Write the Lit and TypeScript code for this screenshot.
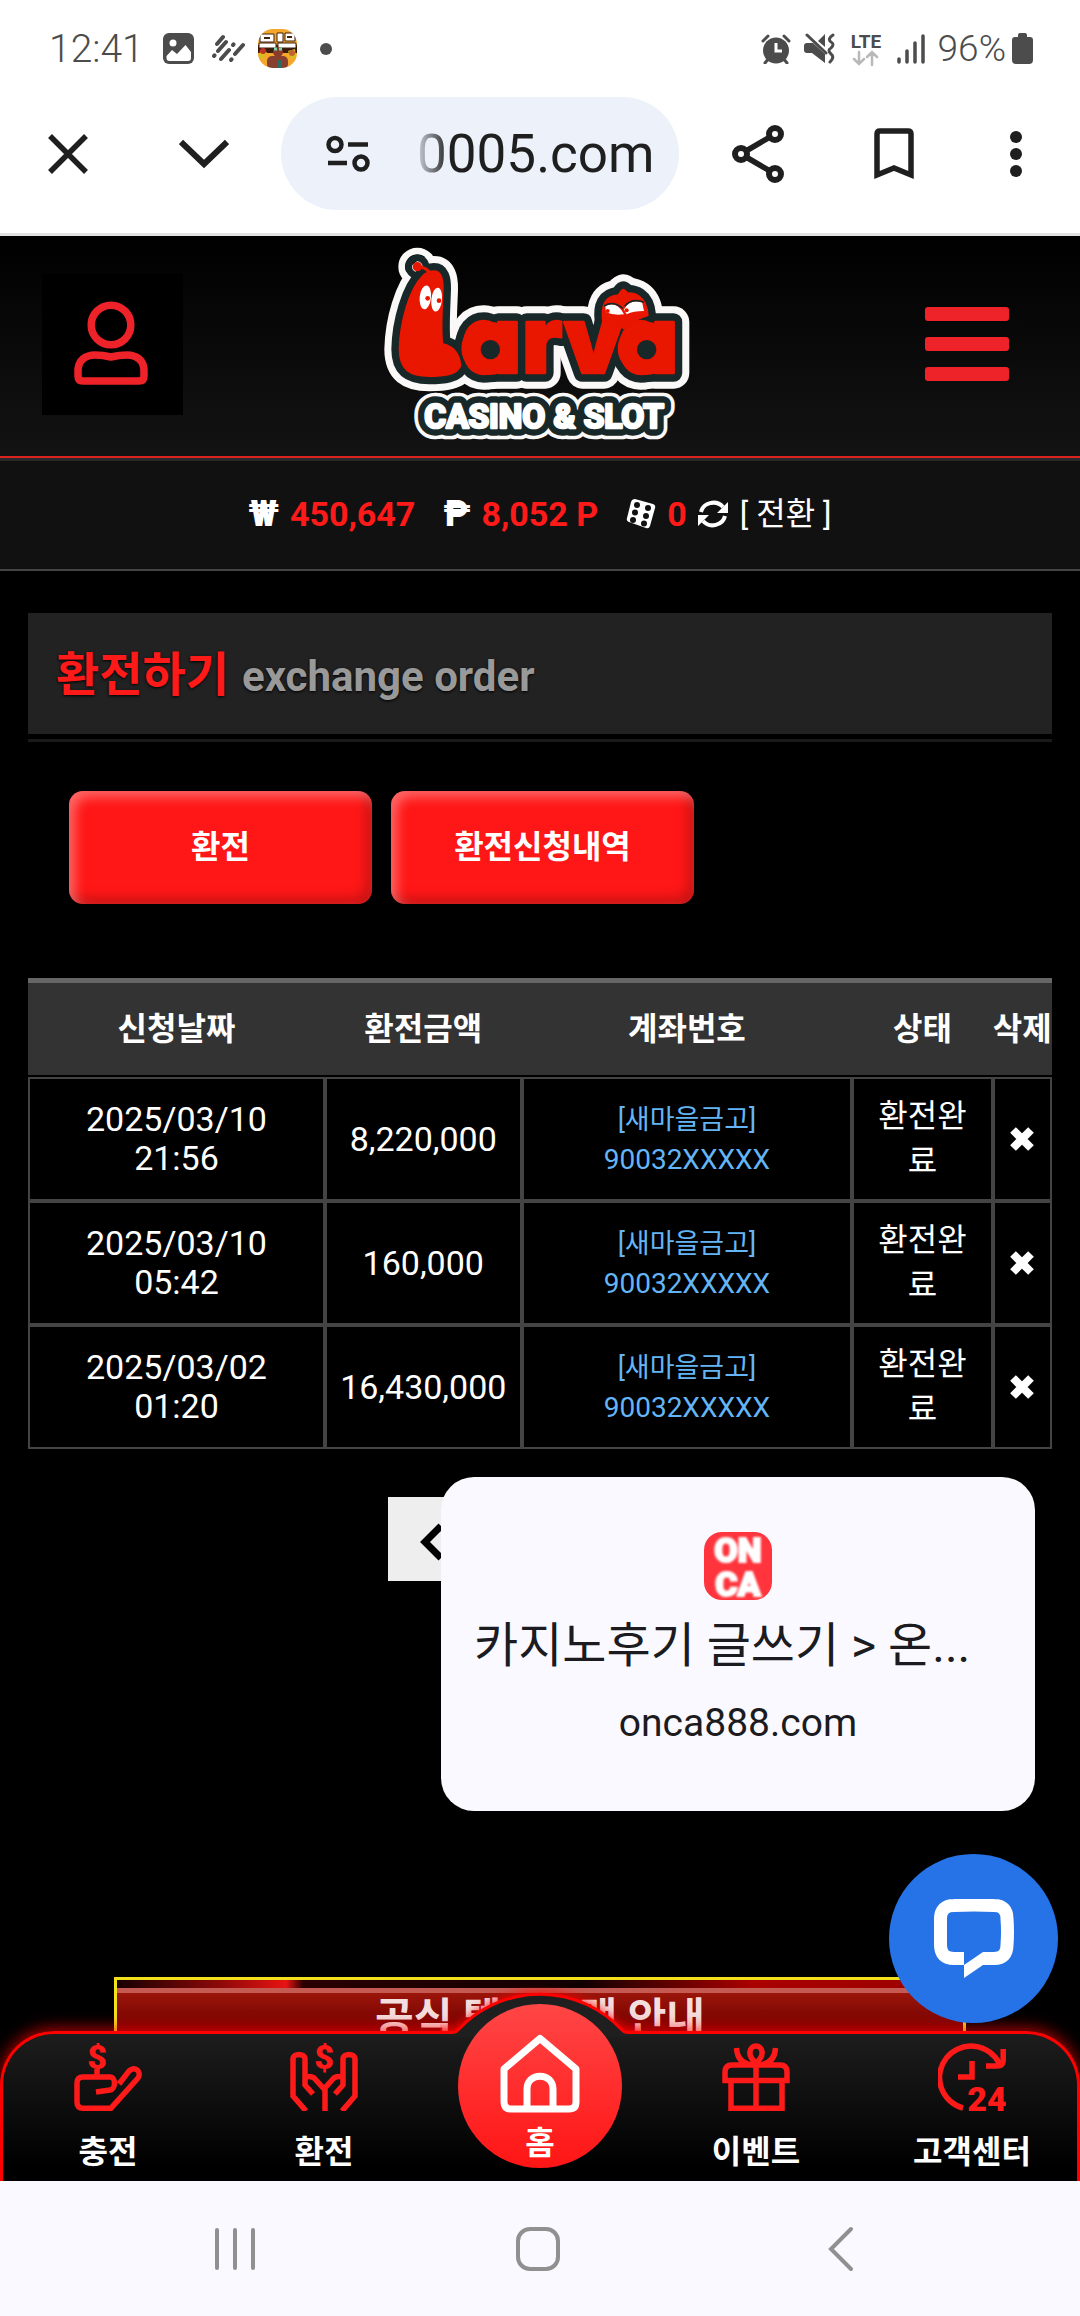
import { LitElement, html, css, svg } from "lit";
import { customElement } from "lit/decorators.js";

interface Exchange {
  date: string;
  time: string;
  amount: string;
  bank: string;
  account: string;
  status: string;
}

const EXCHANGES: Exchange[] = [
  { date: "2025/03/10", time: "21:56", amount: "8,220,000", bank: "[새마을금고]", account: "90032XXXXX", status: "환전완료" },
  { date: "2025/03/10", time: "05:42", amount: "160,000", bank: "[새마을금고]", account: "90032XXXXX", status: "환전완료" },
  { date: "2025/03/02", time: "01:20", amount: "16,430,000", bank: "[새마을금고]", account: "90032XXXXX", status: "환전완료" },
];

/* Status bar and browser toolbar */
@customElement("browser-top")
export class BrowserTop extends LitElement {
  static styles = css`
    :host { display: block; background: #fff; border-bottom: 3px solid #e1e1e1; color: #1f1f1f; }
    svg { display: block; }
    .status { display: flex; align-items: center; justify-content: space-between; height: 97px; padding: 0 47px 0 49px; color: #4c4c4c; box-sizing: border-box; }
    .group { display: flex; align-items: center; }
    .left { gap: 19px; }
    .right { gap: 13px; }
    .clock { font-size: 39px; font-weight: 300; line-height: 40px; }
    .notes { display: flex; align-items: center; gap: 13px; }
    .power { display: flex; align-items: center; gap: 6px; font-size: 37px; font-weight: 300; line-height: 40px; }
    .more { margin-left: 10px; }
    .toolbar { display: flex; align-items: center; padding-bottom: 23px; }
    button { border: 0; background: none; padding: 0; margin: 0; color: inherit; font: inherit; display: flex; align-items: center; justify-content: center; }
    .tool { width: 136px; height: 113px; }
    .dots { width: 108px; margin-right: 10px; }
    .pill { flex: 1; margin: 0 11px 0 9px; height: 113px; border-radius: 57px; background: #ecf1fa; display: flex; align-items: center; gap: 47px; padding-left: 45px; min-width: 0; }
    .url { font-size: 53px; line-height: 60px; white-space: nowrap; -webkit-mask-image: linear-gradient(90deg, rgba(0, 0, 0, 0.15), #000 32px); mask-image: linear-gradient(90deg, rgba(0, 0, 0, 0.15), #000 32px); }
  `;

  render() {
    return html`
      <div class="status">
        <div class="group left">
          <span class="clock">12:41</span>
          <div class="notes">
            <svg width="31" height="31" viewBox="0 0 31 31"><rect width="31" height="31" rx="6" fill="currentColor" /><circle cx="10" cy="10" r="3.5" fill="#fff" /><path d="M3.500 23 9 17l5 4 8.500-9 5.500 7v6q0 3-3 3H6.500q-3 0-3-3z" fill="#fff" /></svg>
            <svg width="38" height="31" viewBox="0 0 38 31" stroke="currentColor" stroke-width="4" stroke-linecap="round"><path d="M10 11l6-7M7 23l.5-.6M11 18l8-9M14 26l8-9M26 12l.500-.600M24 27l.500-.600M28 21l8-9" /></svg>
            <svg width="39" height="39" viewBox="0 0 39 39">
              <defs><clipPath id="app"><rect width="39" height="39" rx="15" /></clipPath></defs>
              <g clip-path="url(#app)"><rect width="39" height="39" fill="#f5a72c" /><rect y="16" width="39" height="8" fill="#3a1a0c" /><path d="M2 5h14v8H2zM19 4h6v9h-6zM27 4h10v8H27zM1 14h17v5H1zM20 14h18v5H20z" fill="#fff" stroke="#40200f" stroke-width="1" /><path d="M6 9h6M29 8h5" stroke="#40200f" stroke-width="2" /><path d="M2 21l7 2-4 7H1zM30 22l7-2 1 8-5 2z" fill="#d7bd1f" /><circle cx="5" cy="22" r="3" fill="#c22f25" /><circle cx="34" cy="24" r="3" fill="#c2622f" /><rect x="9" y="27" width="21" height="13" rx="5" fill="#87402f" /><circle cx="20" cy="23" r="5" fill="#8a3b2b" /><path d="M16 20h3M21 20h3" stroke="#79d6b0" stroke-width="3" /><path d="M22 31v8" stroke="#2f6a60" stroke-width="4" /></g>
            </svg>
            <svg class="more" width="12" height="12" viewBox="0 0 12 12"><circle cx="6" cy="6" r="6" fill="currentColor" /></svg>
          </div>
        </div>
        <div class="group right">
          <svg width="30" height="30" viewBox="0 0 30 30"><circle cx="15" cy="16.500" r="13" fill="currentColor" /><path d="M2 7l5-5M28 7l-5-5M4 29l4-5M26 29l-4-5" stroke="currentColor" stroke-width="3" stroke-linecap="round" /><path d="M15 9v8h6" fill="none" stroke="#fff" stroke-width="3" /></svg>
          <svg width="31" height="31" viewBox="0 0 31 31"><path d="M0 13q0-3 3-3h6L21 21v9L8 20H3q-3 0-3-3zM21 1v13l-7-6z" fill="currentColor" /><path d="M3 2l19 18" stroke="currentColor" stroke-width="3" stroke-linecap="round" /><path d="M29 2q-6 4-2 7 4 2 0 6-4 2 0 6 4 3-1 8" fill="none" stroke="currentColor" stroke-width="3" stroke-linecap="round" /></svg>
          <svg width="36" height="34" viewBox="0 0 36 34"><text x="18" y="16" text-anchor="middle" font-size="19" font-weight="700" fill="currentColor">LTE</text><path d="M11 20v12M6 27l5 5 5-5M24 33V20M19 25l5-5 5 5" fill="none" stroke="#b9b9b9" stroke-width="2.500" stroke-linecap="round" /></svg>
          <svg width="28" height="30" viewBox="0 0 28 30" stroke="currentColor" stroke-width="3.500" stroke-linecap="round"><path d="M2 25v3M10 17v11M18 9v19M26 2v26" /></svg>
          <span class="power">96%<svg width="21" height="31" viewBox="0 0 21 31"><path d="M6 2q0-2 2-2h5q2 0 2 2v2h3q3 0 3 3v20q0 4-4 4H4q-4 0-4-4V7q0-3 3-3h3z" fill="currentColor" /></svg></span>
        </div>
      </div>
      <div class="toolbar">
        <button class="tool" aria-label="닫기"><svg width="40" height="40" viewBox="0 0 40 40" stroke="currentColor" stroke-width="5.500"><path d="M2 2l36 36M38 2L2 38" /></svg></button>
        <button class="tool" aria-label="최소화"><svg width="50" height="30" viewBox="0 0 50 30" fill="none" stroke="currentColor" stroke-width="6"><path d="M2 3l23 22L48 3" /></svg></button>
        <div class="pill">
          <button aria-label="사이트 설정"><svg width="44" height="38" viewBox="0 0 44 38" fill="none" stroke="currentColor" stroke-width="4.500"><circle cx="9" cy="9.500" r="6.500" /><path d="M22 9.500h20M2 28h19" /><circle cx="35" cy="28" r="6.500" /></svg></button>
          <span class="url">0005.com</span>
        </div>
        <button class="tool" aria-label="공유"><svg width="52" height="58" viewBox="0 0 52 58" fill="none" stroke="currentColor"><g stroke-width="6"><circle cx="9" cy="29" r="6" /><circle cx="43" cy="9" r="6" /><circle cx="43" cy="49" r="6" /></g><path d="M14 26L38 12M14 32l24 14" stroke-width="5.500" /></svg></button>
        <button class="tool" aria-label="북마크"><svg width="40" height="52" viewBox="0 0 40 52" fill="none" stroke="currentColor" stroke-width="5.500"><path d="M3 47V6q0-3 3-3h28q3 0 3 3v41l-17-7z" /></svg></button>
        <button class="tool dots" aria-label="메뉴"><svg width="12" height="46" viewBox="0 0 12 46" fill="currentColor"><circle cx="6" cy="6" r="6" /><circle cx="6" cy="23" r="6" /><circle cx="6" cy="40" r="6" /></svg></button>
      </div>
    `;
  }
}

const wormBody = "M222 122C240 122 248 140 247 175C245 240 240 290 246 340C272 345 296 360 300 404C290 430 250 434 208 434C150 434 120 415 120 355C122 270 150 175 190 135Q205 122 222 122Z";
const smallHead = "M730 270C724 225 736 196 776 194C826 176 858 200 862 252C830 262 800 282 790 290Q755 270 730 270Z";

const letters = (cls: string) => svg`
  <g class=${cls}>
    <path d=${wormBody} />
    <path d=${smallHead} />
    <circle cx="172" cy="107" r="10" />
    <path d="M776 195q8-16 14-18 8 4 12 14z" />
    <ellipse cx="388" cy="352" rx="80" ry="76" />
    <ellipse cx="857" cy="352" rx="80" ry="76" />
    <text class="lava" x="303 486 611 774" y="426">arva</text>
  </g>`;

/* Site header with the logo and the balance strip */
@customElement("site-header")
export class SiteHeader extends LitElement {
  static styles = css`
    :host { display: block; }
    svg { display: block; }
    button { border: 0; padding: 0; background: none; display: flex; align-items: center; justify-content: center; font: inherit; color: inherit; }
    .bar { display: grid; grid-template-columns: 1fr auto 1fr; align-items: center; padding: 10px 71px 14px 42px; background: linear-gradient(#000, #131313); border-bottom: 2px solid #dc2320; }
    .user { width: 141px; height: 141px; background: #000; padding-right: 3px; }
    .menu { justify-self: end; }
    .logo { margin-left: 29px; }
    .lava { font-family: Inter, "Open Sans", sans-serif; font-weight: 900; font-size: 280px; font-feature-settings: "cv11"; }
    .white { fill: #fbf8f8; stroke: #fbf8f8; stroke-width: 94px; stroke-linejoin: round; }
    .dark { fill: #182727; stroke: #182727; stroke-width: 52px; stroke-linejoin: round; }
    .red { fill: #e91600; stroke: #e91600; stroke-width: 8px; stroke-linejoin: round; }
    .sub { font-family: "Liberation Sans Narrow", "Roboto", sans-serif; font-weight: 700; font-size: 100px; stroke-linejoin: round; }
    .balance { display: flex; align-items: center; justify-content: center; min-height: 108px; background: #111; border-top: 3px solid #292929; border-bottom: 2px solid #444; color: #fff; font-size: 34px; line-height: 40px; gap: 28px; padding-bottom: 2px; box-sizing: border-box; min-height: 113px; }
    .item { display: flex; align-items: center; gap: 11px; }
    .num { color: #ff1a1a; font-weight: 700; }
    .sign { font-weight: 900; font-size: 36px; }
    .convert { font-size: 32px; gap: 12px; }
  `;

  render() {
    return html`
      <header class="bar">
        <button class="user" aria-label="내 정보"><svg width="76" height="86" viewBox="0 0 76 86" fill="none" stroke="#ee2329" stroke-width="7.500"><circle cx="38" cy="24" r="19.800" /><path d="M5 72C4 58 14 54 22 54Q30 54 38 56Q46 54 54 54C62 54 72 58 71 72V75Q71 80 66 80H10Q5 80 5 75Z" /></svg></button>
        <svg class="logo" width="312" height="196" viewBox="72 45 936 588" role="img" aria-label="Larva Casino &amp; Slot">
          ${letters("white")}${letters("dark")}${letters("red")}
          <path d="M172 107Q200 108 212 130" fill="none" stroke="#e91600" stroke-width="10" />
          <g fill="#182727"><circle cx="391" cy="356" r="29" /><circle cx="860" cy="356" r="29" /></g>
          <g fill="#fff"><ellipse cx="196" cy="199" rx="17" ry="36" transform="rotate(6 196 199)" /><ellipse cx="230" cy="206" rx="16" ry="36" transform="rotate(6 230 206)" /><path d="M736 225Q770 208 792 250Q760 254 738 244Z" /><path d="M792 236Q804 206 846 212L852 240Q820 240 800 250Z" /></g>
          <g fill="#e91600"><circle cx="203" cy="202" r="7" /><circle cx="237" cy="209" r="7" /><circle cx="743" cy="240" r="6" /><circle cx="800" cy="238" r="6" /></g>
          <g fill="none" stroke="#182727" stroke-width="5"><path d="M732 225Q760 208 788 232M794 226Q816 200 852 214" /></g>
          <g class="sub">
            <text x="193" y="591" fill="#fbf8f8" stroke="#fbf8f8" stroke-width="68">CASINO &amp; SLOT</text>
            <text x="193" y="591" fill="#182727" stroke="#182727" stroke-width="46">CASINO &amp; SLOT</text>
            <text x="193" y="591" fill="#fff" stroke="#fff" stroke-width="8">CASINO &amp; SLOT</text>
          </g>
        </svg>
        <button class="menu" aria-label="전체 메뉴"><svg width="84" height="74" viewBox="0 0 84 74" fill="#ee2329"><rect width="84" height="14" rx="3" /><rect y="30" width="84" height="14" rx="3" /><rect y="60" width="84" height="14" rx="3" /></svg></button>
      </header>
      <div class="balance">
        <span class="item"><span class="sign">₩</span><span class="num">450,647</span></span>
        <span class="item"><span class="sign">₱</span><span class="num">8,052 P</span></span>
        <span class="item">
          <svg width="30" height="30" viewBox="0 0 30 30"><path d="M9 0L27 5q3 1 2 4L24 27q-1 3-4 2L3 23q-3-1-2-4L5 3q1-3 4-3z" fill="#fff" /><g fill="#111"><circle cx="11" cy="6" r="3" /><circle cx="22" cy="9" r="3" /><circle cx="9" cy="13.500" r="3" /><circle cx="20" cy="17" r="3" /><circle cx="7" cy="21" r="3" /><circle cx="18" cy="24.500" r="3" /></g></svg>
          <span class="num">0</span>
          <button class="item convert"><svg width="30" height="30" viewBox="0 0 30 30"><path d="M3 13C5 4 18 0 25 8M27 17C25 26 12 30 5 22" fill="none" stroke="#fff" stroke-width="4" /><path d="M30 3v11H19zM0 27V16h11z" fill="#fff" /></svg><span>[ 전환 ]</span></button>
        </span>
      </div>
    `;
  }
}

@customElement("site-nav")
export class SiteNav extends LitElement {
  static styles = css`
    :host { display: block; position: relative; z-index: 2; }
    svg { display: block; }
    .back { position: absolute; inset: 0; border: 3px solid #f00; border-bottom: 0; border-radius: 54px 54px 0 0; background: linear-gradient(#1d1d1d, #000 90%); box-shadow: 0 -2px 16px rgba(255, 0, 0, 0.75); clip-path: inset(-30px 0 0 0); }
    .bump { position: absolute; left: 50%; top: -44px; margin-left: -100px; }
    .rim { filter: drop-shadow(0 -2px 4px rgba(255, 0, 0, 0.7)); }
    .items { position: relative; display: grid; grid-template-columns: repeat(5, 1fr); min-height: 150px; }
    .items a { display: flex; flex-direction: column; align-items: center; gap: 21px; padding-top: 12px; color: #fff; text-decoration: none; font-size: 32px; line-height: 40px; font-weight: 700; white-space: nowrap; }
    .icon { color: #ff1a1a; fill: none; stroke: currentColor; stroke-width: 5.5px; }
    .icon text { fill: currentColor; stroke: none; font-weight: 900; }
    .items .home { justify-self: center; width: 164px; height: 164px; box-sizing: border-box; margin-top: -27px; padding-top: 30px; gap: 9px; border-radius: 50%; background: linear-gradient(#ff4646, #ff1515); }
  `;

  render() {
    return html`
      <div class="back"></div>
      <svg class="bump" width="200" height="50" viewBox="0 0 200 50">
        <path class="rim" d="M-20 80V45.500H13Q16 45.500 18 43A112 112 0 0 1 182 43Q184 45.500 187 45.500H220V80Z" fill="#1f1f1f" stroke="#f00" stroke-width="3" />
      </svg>
      <nav class="items">
        <a href="#deposit"><svg class="icon" width="68" height="68" viewBox="0 0 68 68"><path d="M45 41L55 28C61 22 68 29 64 35L37 65.200H9Q3 65.200 3 59V40Q3 34 9 34H36C42 34 42 46 36 47L22 49M23 26V34" /><text x="23" y="26" text-anchor="middle" font-size="34">$</text></svg><span>충전</span></a>
        <a href="#exchange"><svg class="icon" width="68" height="68" viewBox="0 0 68 68"><path d="M16 68L3 53V16C3 10 15 10 15 16V42L23 51M52 68L65 53V16C65 10 53 10 53 16V42L45 51M15 35C19 32 24 34 26 37L35 47V68M53 35C49 32 44 34 42 37L34 46" /><text x="34" y="26" text-anchor="middle" font-size="34">$</text></svg><span>환전</span></a>
        <a class="home" href="#home"><svg width="80" height="80" viewBox="0 0 80 80" fill="none" stroke="#fff" stroke-width="7" stroke-linejoin="round"><path d="M40 4.500L4 35V68Q4 75 11 75H69Q76 75 76 68V35Z" /><path d="M27 75V55C27 38 53 38 53 55V75" /></svg><span>홈</span></a>
        <a href="#event"><svg class="icon" width="68" height="68" viewBox="0 0 68 68"><path d="M3 37.500V29Q3 22 10 22H58Q65 22 65 29V37.500ZM9 38V65.200H60V38M34 22V65M34 20C24 12 28 3 34 3C40 3 44 12 34 20M14.500 5C15 15 20 21 31 22M53.500 5C53 15 48 21 37 22" /></svg><span>이벤트</span></a>
        <a href="#support"><svg class="icon" width="68" height="68" viewBox="0 0 68 68"><path d="M25 65A31.500 31.500 0 1 1 61 20M65.200 6V18Q65 23 59 23H48M34 18V34H20" /><text x="49" y="68" text-anchor="middle" font-size="34">24</text></svg><span>고객센터</span></a>
      </nav>
    `;
  }
}

@customElement("app-root")
export class AppRoot extends LitElement {
  static styles = css`
    :host { display: flex; flex-direction: column; min-height: 100vh; background: #000; color: #fff; font-family: Roboto, "Noto Sans CJK KR", sans-serif; }
    * { box-sizing: border-box; }
    svg { display: block; }
    button { font: inherit; color: inherit; border: 0; padding: 0; background: none; }
    main { flex: 1; display: flex; flex-direction: column; padding: 42px 28px 0; position: relative; }
    .heading { padding-bottom: 5px; border-bottom: 3px solid #1a1a1a; }
    h1 { margin: 0; display: flex; align-items: baseline; gap: 13px; min-height: 121px; padding: 32px 28px 0; background: #222; font-size: 47px; line-height: 60px; font-weight: 700; color: #ff1a1a; text-shadow: 0 1px 3px #000; }
    h1 small { font-size: 42px; color: #999; }
    .tabs { display: flex; gap: 19px; padding: 49px 41px 74px; }
    .tab { width: 303px; height: 113px; border-radius: 14px; background: #ff1717; font-size: 32px; font-weight: 700; line-height: 40px; padding-bottom: 2px; box-shadow: inset 6px 6px 12px rgba(255, 255, 255, 0.35), inset -6px -6px 12px rgba(0, 0, 0, 0.22); }
    table { width: 100%; table-layout: fixed; border-collapse: separate; border-spacing: 0; text-align: center; }
    th { height: 99px; padding: 0; background: #333; background-clip: padding-box; border-top: 5px solid #666; border-bottom: 2px solid #000; font-size: 32px; line-height: 40px; white-space: nowrap; }
    td { height: 124px; padding: 0 12px; border: 2px solid #444; font-size: 34px; line-height: 39px; }
    .c-date { width: 29%; }
    .c-amount { width: 19.2%; }
    .c-account { width: 32.3%; }
    .c-status { width: 13.7%; }
    .c-delete { width: 5.8%; }
    .date { padding: 0 36px; }
    .amount { padding: 0; }
    .account { color: #64b5f6; font-size: 28px; }
    .bank { font-size: 27px; }
    .status { font-size: 32px; line-height: 45px; }
    .delete { padding: 0; }
    .delete button { display: flex; margin: 0 auto; }
    .pager { position: relative; padding: 48px 0 80px 35%; }
    .prev { width: 88px; height: 84px; display: flex; align-items: center; justify-content: center; background: #eee; margin-left: 2px; padding-top: 6px; }
    .card { position: absolute; right: 17px; top: 28px; width: 594px; height: 334px; border-radius: 33px; background: #faf9ff; color: #1b1b20; display: flex; flex-direction: column; align-items: center; padding: 55px 33px; }
    .card-title { font-size: 48px; line-height: 64px; margin-top: 14px; align-self: flex-start; white-space: nowrap; }
    .card-url { font-size: 39px; line-height: 44px; margin-top: 23px; }
    .banner { margin: auto 86px 0; border: 3px solid #f2e01c; border-bottom: 0; background: #760000; text-align: center; padding-bottom: 8px; }
    .flare { height: 8px; background: linear-gradient(90deg, #160000, #8c0808 12%, #e81313 20%, #2a0000 22%, #120000 55%, #a00 75%, #900); }
    .banner-title { border-top: 5px solid #c55a52; background: linear-gradient(#9b150a, #700000 38px); font-size: 42px; font-weight: 700; line-height: 52px; color: #f4dede; white-space: nowrap; }
    .chat { position: absolute; right: 22px; bottom: 30px; width: 169px; height: 169px; border-radius: 50%; background: #2673e8; display: flex; align-items: center; justify-content: center; z-index: 3; }
    site-nav { margin-top: -22px; }
    .system { display: grid; grid-template-columns: 303px 1fr 303px; padding: 0 88px 0 83px; height: 135px; background: #faf9ff; align-items: center; justify-items: center; color: #909090; }
  `;

  private row(item: Exchange) {
    return html`
      <tr>
        <td class="date">${item.date} ${item.time}</td>
        <td class="amount">${item.amount}</td>
        <td class="account"><span class="bank">${item.bank}</span><br />${item.account}</td>
        <td class="status">${item.status}</td>
        <td class="delete"><button aria-label="삭제"><svg width="24" height="24" viewBox="0 0 24 24" stroke="#fff" stroke-width="8"><path d="M3 3l18 18M21 3L3 21" /></svg></button></td>
      </tr>
    `;
  }

  render() {
    return html`
      <browser-top></browser-top>
      <site-header></site-header>
      <main>
        <div class="heading"><h1>환전하기 <small>exchange order</small></h1></div>
        <div class="tabs">
          <button class="tab">환전</button>
          <button class="tab">환전신청내역</button>
        </div>
        <table>
          <thead>
            <tr>
              <th class="c-date">신청날짜</th>
              <th class="c-amount">환전금액</th>
              <th class="c-account">계좌번호</th>
              <th class="c-status">상태</th>
              <th class="c-delete">삭제</th>
            </tr>
          </thead>
          <tbody>
            ${EXCHANGES.map((item) => this.row(item))}
          </tbody>
        </table>
        <div class="pager">
          <button class="prev" aria-label="이전"><svg width="26" height="38" viewBox="0 0 26 38" fill="none" stroke="#000" stroke-width="7"><path d="M22 3L6 19l16 16" /></svg></button>
          <div class="card">
            <svg width="68" height="68" viewBox="0 0 68 68">
              <defs><filter id="soft"><feGaussianBlur stdDeviation="0.9" /></filter></defs>
              <rect width="68" height="68" rx="18" fill="#ff343c" />
              <g fill="#fff" stroke="#fff" stroke-width="2" font-size="34" font-weight="900" text-anchor="middle" filter="url(#soft)"><text x="34" y="30">ON</text><text x="34" y="64">CA</text></g>
            </svg>
            <span class="card-title">카지노후기 글쓰기 &gt; 온...</span>
            <span class="card-url">onca888.com</span>
          </div>
        </div>
        <div class="banner">
          <div class="flare"></div>
          <div class="banner-title">공식 텔레그램 안내</div>
        </div>
        <button class="chat" aria-label="채팅"><svg width="80" height="80" viewBox="0 0 80 80"><path d="M30 59.500H20Q6.500 59.500 6.500 46V20Q6.500 6.500 20 6.500Q40 5.500 60 6.500Q73 6.500 73 20Q74 33 73 46Q73 59.500 60 59.500H49" fill="none" stroke="#fff" stroke-width="13" /><path d="M30 66L49 53h5v13h-5L30 79z" fill="#fff" /></svg></button>
      </main>
      <site-nav></site-nav>
      <div class="system">
        <button aria-label="최근 앱"><svg width="40" height="44" viewBox="0 0 40 44" stroke="currentColor" stroke-width="4" stroke-linecap="round"><path d="M2 3v38M20 3v38M38 3v38" /></svg></button>
        <button aria-label="홈"><svg width="44" height="44" viewBox="0 0 44 44"><rect x="2" y="2" width="40" height="40" rx="12" fill="none" stroke="currentColor" stroke-width="4" /></svg></button>
        <button aria-label="뒤로"><svg width="26" height="46" viewBox="0 0 26 46" fill="none" stroke="currentColor" stroke-width="4" stroke-linecap="round"><path d="M23 3L3 23l20 20" /></svg></button>
      </div>
    `;
  }
}
